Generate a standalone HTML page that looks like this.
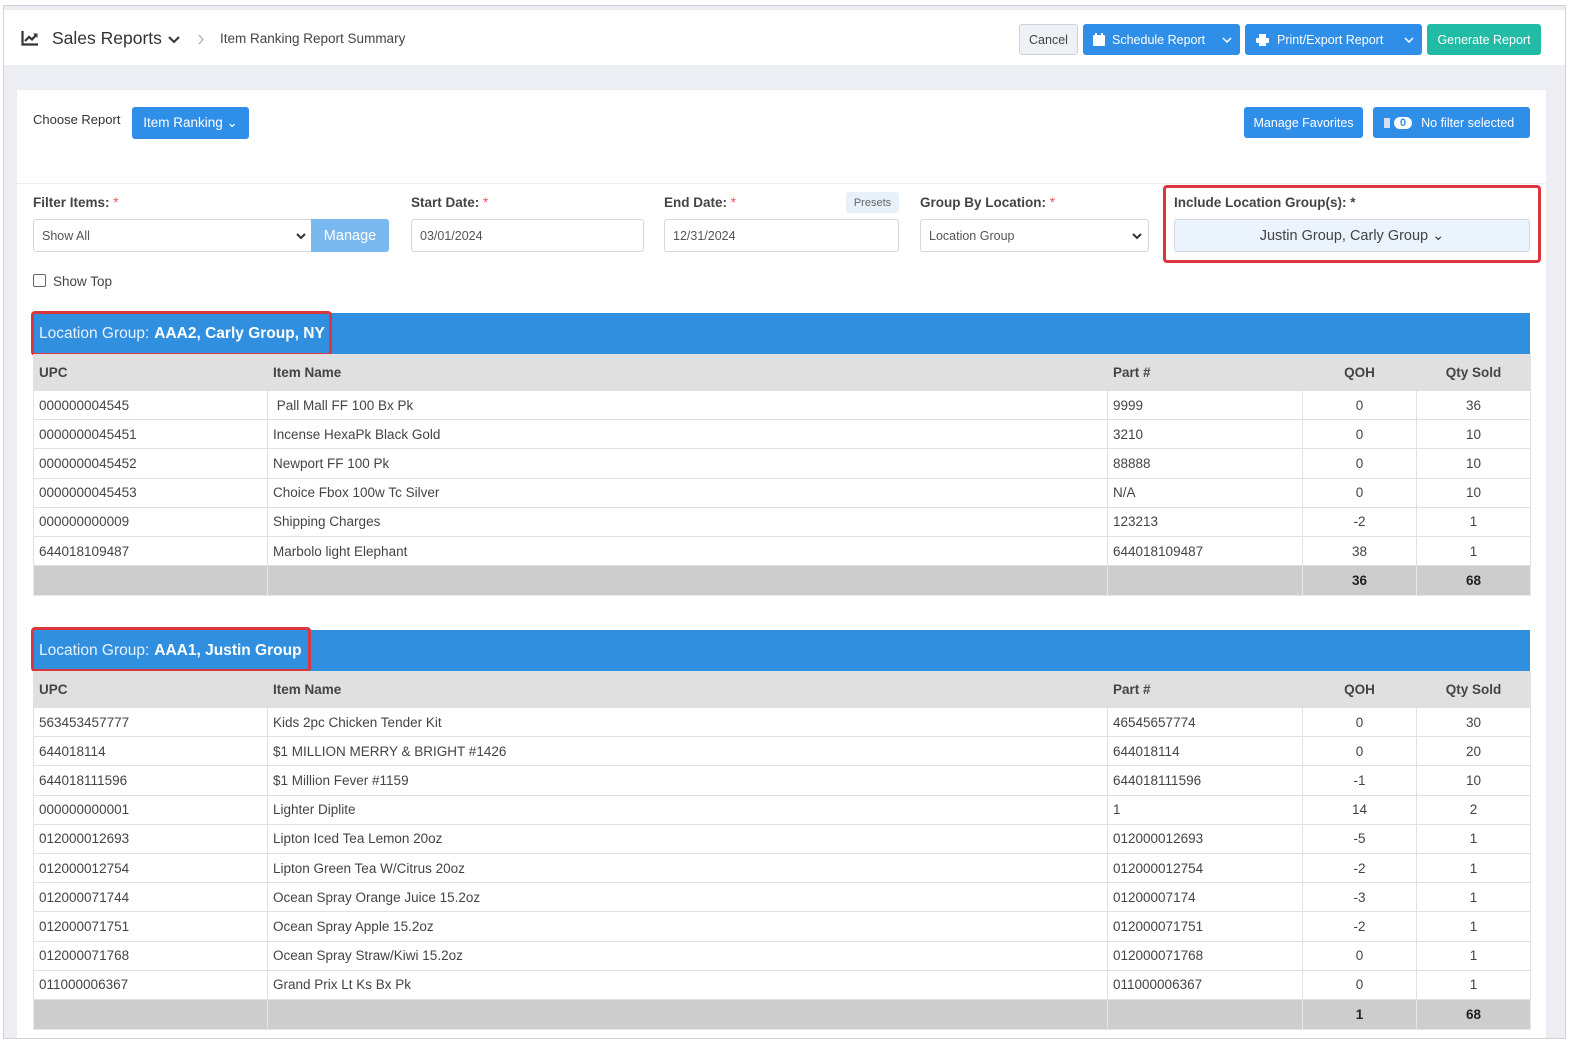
<!DOCTYPE html>
<html style="width:1584px;height:1052px;overflow:hidden"><head><meta charset="utf-8"><style>
*{box-sizing:border-box;margin:0;padding:0}
html,body{overflow:hidden}
body{width:1584px;height:1052px;background:#fff;font-family:"Liberation Sans",sans-serif;color:#333;position:relative;font-size:13px}
#wrap{position:absolute;left:0;top:0;width:1584px;height:1052px;overflow:hidden}
.abs{position:absolute}
.frame{left:3px;top:5px;width:1563px;height:1034px;border:1px solid #d0d2d6;background:#eceef4}
.hdr{left:4px;top:10px;width:1561px;height:55px;background:#fff}
.card{left:17px;top:90px;width:1529px;height:948px;background:#fff}
.btn{position:absolute;border-radius:3px;color:#fff;font-size:12.5px;display:flex;align-items:center;justify-content:center;background:#2f8fe8;white-space:nowrap}
.lbl{position:absolute;font-size:13.5px;font-weight:bold;color:#444;white-space:nowrap}
.lbl b{color:#e55;font-weight:normal}
.inp{position:absolute;height:33px;border:1px solid #d4d7dc;border-radius:3px;background:#fff;font-size:12.5px;color:#555;padding:0 8px;display:flex;align-items:center;white-space:nowrap}
table{position:absolute;left:33px;width:1497px;border-collapse:collapse;table-layout:fixed;font-size:13.5px}
td,th{border:1px solid #e0e0e0;padding:0 5px;height:29.2px;white-space:nowrap;overflow:hidden;color:#444}
th{background:#e0e0e0;font-weight:bold;text-align:left;height:36px;border-color:#e0e0e0}
.c{text-align:center}
tr.tot td{background:#cdcdcd;font-weight:bold;color:#222;border-color:#e8e8e8;height:30px}
.sec{position:absolute;left:33px;width:1497px;height:41px;background:#318fe0;color:#e8f2ff;font-size:15.5px;padding-left:6px;display:flex;align-items:center;white-space:nowrap}
.sec b{color:#fff;margin-left:5px}
.red{position:absolute;border:3px solid #d9363e;border-radius:4px}
</style></head><body><div id="wrap">
<div class="abs frame"></div>
<div class="abs hdr"></div>
<svg class="abs" style="left:21px;top:31px" width="18" height="15" viewBox="0 0 18 15"><path d="M1.5 0V13.5H17" stroke="#333" stroke-width="2.2" fill="none"/><path d="M4 10L8 6L11 8.5L15.5 3.5" stroke="#333" stroke-width="2.2" fill="none"/><path d="M12 2.5H16.5V7" fill="#333"/></svg>
<div class="abs" style="left:52px;top:28px;font-size:17.5px;color:#333">Sales Reports</div>
<svg class="abs" style="left:168px;top:36px" width="12" height="8"><path d="M1 1L6 6L11 1" stroke="#333" stroke-width="2" fill="none"/></svg>
<svg class="abs" style="left:198px;top:34px" width="7" height="11"><path d="M1 1L5 5.5L1 10" stroke="#aaa" stroke-width="1.3" fill="none"/></svg>
<div class="abs" style="left:220px;top:31px;font-size:13.5px;color:#444">Item Ranking Report Summary</div>
<div class="btn" style="left:1019px;top:24px;width:59px;height:31px;background:#eef1f5;border:1px solid #cfd3d8;color:#444">Cancel</div>
<div class="btn" style="left:1083px;top:24px;width:157px;height:31px;justify-content:flex-start;padding-left:10px">
<svg width="12" height="13" viewBox="0 0 12 13" style="margin-right:7px"><rect x="0" y="2" width="12" height="11" rx="1" fill="#fff"/><rect x="2" y="0" width="2" height="3" fill="#fff"/><rect x="8" y="0" width="2" height="3" fill="#fff"/></svg>Schedule Report<svg width="10" height="6" style="position:absolute;right:8px;top:13px"><path d="M1 1L5 5L9 1" stroke="#fff" stroke-width="1.5" fill="none"/></svg></div>
<div class="btn" style="left:1245px;top:24px;width:177px;height:31px;justify-content:flex-start;padding-left:11px">
<svg width="13" height="12" viewBox="0 0 13 12" style="margin-right:8px"><rect x="3" y="0" width="7" height="4" fill="#fff"/><rect x="0" y="4" width="13" height="5" rx="1" fill="#fff"/><rect x="3" y="8" width="7" height="4" fill="#fff"/></svg>Print/Export Report<svg width="10" height="6" style="position:absolute;right:8px;top:13px"><path d="M1 1L5 5L9 1" stroke="#fff" stroke-width="1.5" fill="none"/></svg></div>
<div class="btn" style="left:1427px;top:24px;width:114px;height:31px;background:#22bba6">Generate Report</div>

<div class="abs card"></div>
<div class="abs" style="left:33px;top:112px;font-size:13px;color:#333">Choose Report</div>
<div class="btn" style="left:132px;top:107px;width:117px;height:32px;font-size:13.5px">Item Ranking ⌄</div>
<div class="btn" style="left:1244px;top:107px;width:119px;height:31px">Manage Favorites</div>
<div class="btn" style="left:1373px;top:107px;width:157px;height:31px;justify-content:flex-start;padding-left:11px"><span style="display:inline-block;width:6px;height:10px;background:#cfe2f7;margin-right:4px"></span><span style="background:#fff;color:#2f8fe8;border-radius:8px;padding:0 6px;font-size:11px;font-weight:bold;margin-right:9px">0</span>No filter selected</div>
<div class="abs" style="left:17px;top:183px;width:1529px;height:1px;background:#eceef2"></div>

<div class="lbl" style="left:33px;top:195px">Filter Items: <b>*</b></div>
<div class="inp" style="left:33px;top:219px;width:280px">Show All<svg width="10" height="7" style="position:absolute;right:6px;top:13px"><path d="M1 1L5 5L9 1" stroke="#333" stroke-width="2" fill="none"/></svg></div>
<div class="btn" style="left:311px;top:219px;width:78px;height:33px;background:#79b9f0;font-size:14.5px;border-radius:0 3px 3px 0">Manage</div>
<div class="lbl" style="left:411px;top:195px">Start Date: <b>*</b></div>
<div class="inp" style="left:411px;top:219px;width:233px">03/01/2024</div>
<div class="lbl" style="left:664px;top:195px">End Date: <b>*</b></div>
<div class="btn" style="left:846px;top:192px;width:53px;height:21px;background:#e8f1fa;color:#666;font-size:11px">Presets</div>
<div class="inp" style="left:664px;top:219px;width:235px">12/31/2024</div>
<div class="lbl" style="left:920px;top:195px">Group By Location: <b>*</b></div>
<div class="inp" style="left:920px;top:219px;width:229px">Location Group<svg width="10" height="7" style="position:absolute;right:6px;top:13px"><path d="M1 1L5 5L9 1" stroke="#333" stroke-width="2" fill="none"/></svg></div>
<div class="red" style="left:1163px;top:185px;width:378px;height:78px"></div>
<div class="lbl" style="left:1174px;top:195px">Include Location Group(s): *</div>
<div class="inp" style="left:1174px;top:219px;width:356px;background:#ebf3fc;justify-content:center;font-size:14.5px;color:#444">Justin Group, Carly Group ⌄</div>
<div class="abs" style="left:33px;top:274px;width:13px;height:13px;border:1px solid #666;border-radius:2px"></div>
<div class="abs" style="left:53px;top:274px;font-size:13.5px;color:#444">Show Top</div>

<div class="sec" style="top:313px">Location Group: <b>AAA2, Carly Group, NY</b></div>
<div class="red" style="left:31px;top:311px;width:301px;height:45px"></div>
<table style="top:354px">
<colgroup><col style="width:234px"><col style="width:840px"><col style="width:195px"><col style="width:114px"><col style="width:114px"></colgroup>
<tr><th>UPC</th><th>Item Name</th><th>Part #</th><th class="c">QOH</th><th class="c">Qty Sold</th></tr>
<tr><td>000000004545</td><td>&nbsp;Pall Mall FF 100 Bx Pk</td><td>9999</td><td class="c">0</td><td class="c">36</td></tr>
<tr><td>0000000045451</td><td>Incense HexaPk Black Gold</td><td>3210</td><td class="c">0</td><td class="c">10</td></tr>
<tr><td>0000000045452</td><td>Newport FF 100 Pk</td><td>88888</td><td class="c">0</td><td class="c">10</td></tr>
<tr><td>0000000045453</td><td>Choice Fbox 100w Tc Silver</td><td>N/A</td><td class="c">0</td><td class="c">10</td></tr>
<tr><td>000000000009</td><td>Shipping Charges</td><td>123213</td><td class="c">-2</td><td class="c">1</td></tr>
<tr><td>644018109487</td><td>Marbolo light Elephant</td><td>644018109487</td><td class="c">38</td><td class="c">1</td></tr>
<tr class="tot"><td></td><td></td><td></td><td class="c">36</td><td class="c">68</td></tr>
</table>

<div class="sec" style="top:630px">Location Group: <b>AAA1, Justin Group</b></div>
<div class="red" style="left:31px;top:627px;width:280px;height:45px"></div>
<table style="top:671px">
<colgroup><col style="width:234px"><col style="width:840px"><col style="width:195px"><col style="width:114px"><col style="width:114px"></colgroup>
<tr><th>UPC</th><th>Item Name</th><th>Part #</th><th class="c">QOH</th><th class="c">Qty Sold</th></tr>
<tr><td>563453457777</td><td>Kids 2pc Chicken Tender Kit</td><td>46545657774</td><td class="c">0</td><td class="c">30</td></tr>
<tr><td>644018114</td><td>$1 MILLION MERRY &amp; BRIGHT #1426</td><td>644018114</td><td class="c">0</td><td class="c">20</td></tr>
<tr><td>644018111596</td><td>$1 Million Fever #1159</td><td>644018111596</td><td class="c">-1</td><td class="c">10</td></tr>
<tr><td>000000000001</td><td>Lighter Diplite</td><td>1</td><td class="c">14</td><td class="c">2</td></tr>
<tr><td>012000012693</td><td>Lipton Iced Tea Lemon 20oz</td><td>012000012693</td><td class="c">-5</td><td class="c">1</td></tr>
<tr><td>012000012754</td><td>Lipton Green Tea W/Citrus 20oz</td><td>012000012754</td><td class="c">-2</td><td class="c">1</td></tr>
<tr><td>012000071744</td><td>Ocean Spray Orange Juice 15.2oz</td><td>01200007174</td><td class="c">-3</td><td class="c">1</td></tr>
<tr><td>012000071751</td><td>Ocean Spray Apple 15.2oz</td><td>012000071751</td><td class="c">-2</td><td class="c">1</td></tr>
<tr><td>012000071768</td><td>Ocean Spray Straw/Kiwi 15.2oz</td><td>012000071768</td><td class="c">0</td><td class="c">1</td></tr>
<tr><td>011000006367</td><td>Grand Prix Lt Ks Bx Pk</td><td>011000006367</td><td class="c">0</td><td class="c">1</td></tr>
<tr class="tot"><td></td><td></td><td></td><td class="c">1</td><td class="c">68</td></tr>
</table>
<div class="abs" style="left:0;top:1039px;width:1584px;height:13px;background:#fff"></div>
</div></body></html>
